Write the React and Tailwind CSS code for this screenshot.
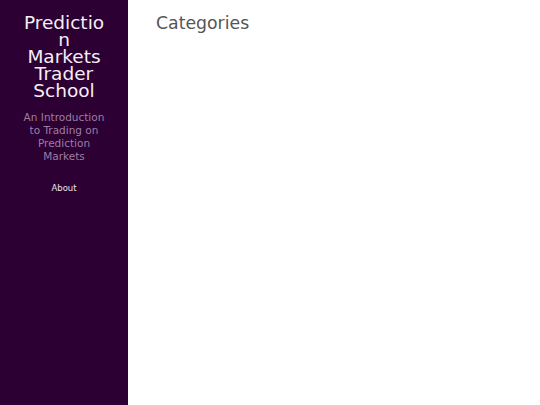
export default function App() {
  return (
    <div className="flex min-h-[405px] w-full" style={{ fontFamily: '"DejaVu Sans", sans-serif' }}>
      <aside className="w-[128px] shrink-0 bg-[#2c0033] px-[23px] pt-[14px] text-center">
        <h1 className="text-[18.5px] leading-[17px] text-[#f5eef6] [overflow-wrap:anywhere]">
          Prediction Markets Trader School
        </h1>
        <p className="mt-[12px] text-[10.5px] leading-[13px] text-[#9c7ea2]">
          An Introduction to Trading on Prediction Markets
        </p>
        <nav className="mt-[19px] text-[8.5px] leading-[12px] text-[#ece2ee]">
          <a href="#">About</a>
        </nav>
      </aside>
      <main className="flex-1 bg-white px-7 pt-[12px]">
        <h2 className="text-[17.3px] leading-[22px] text-[#555555]">Categories</h2>
      </main>
    </div>
  );
}
